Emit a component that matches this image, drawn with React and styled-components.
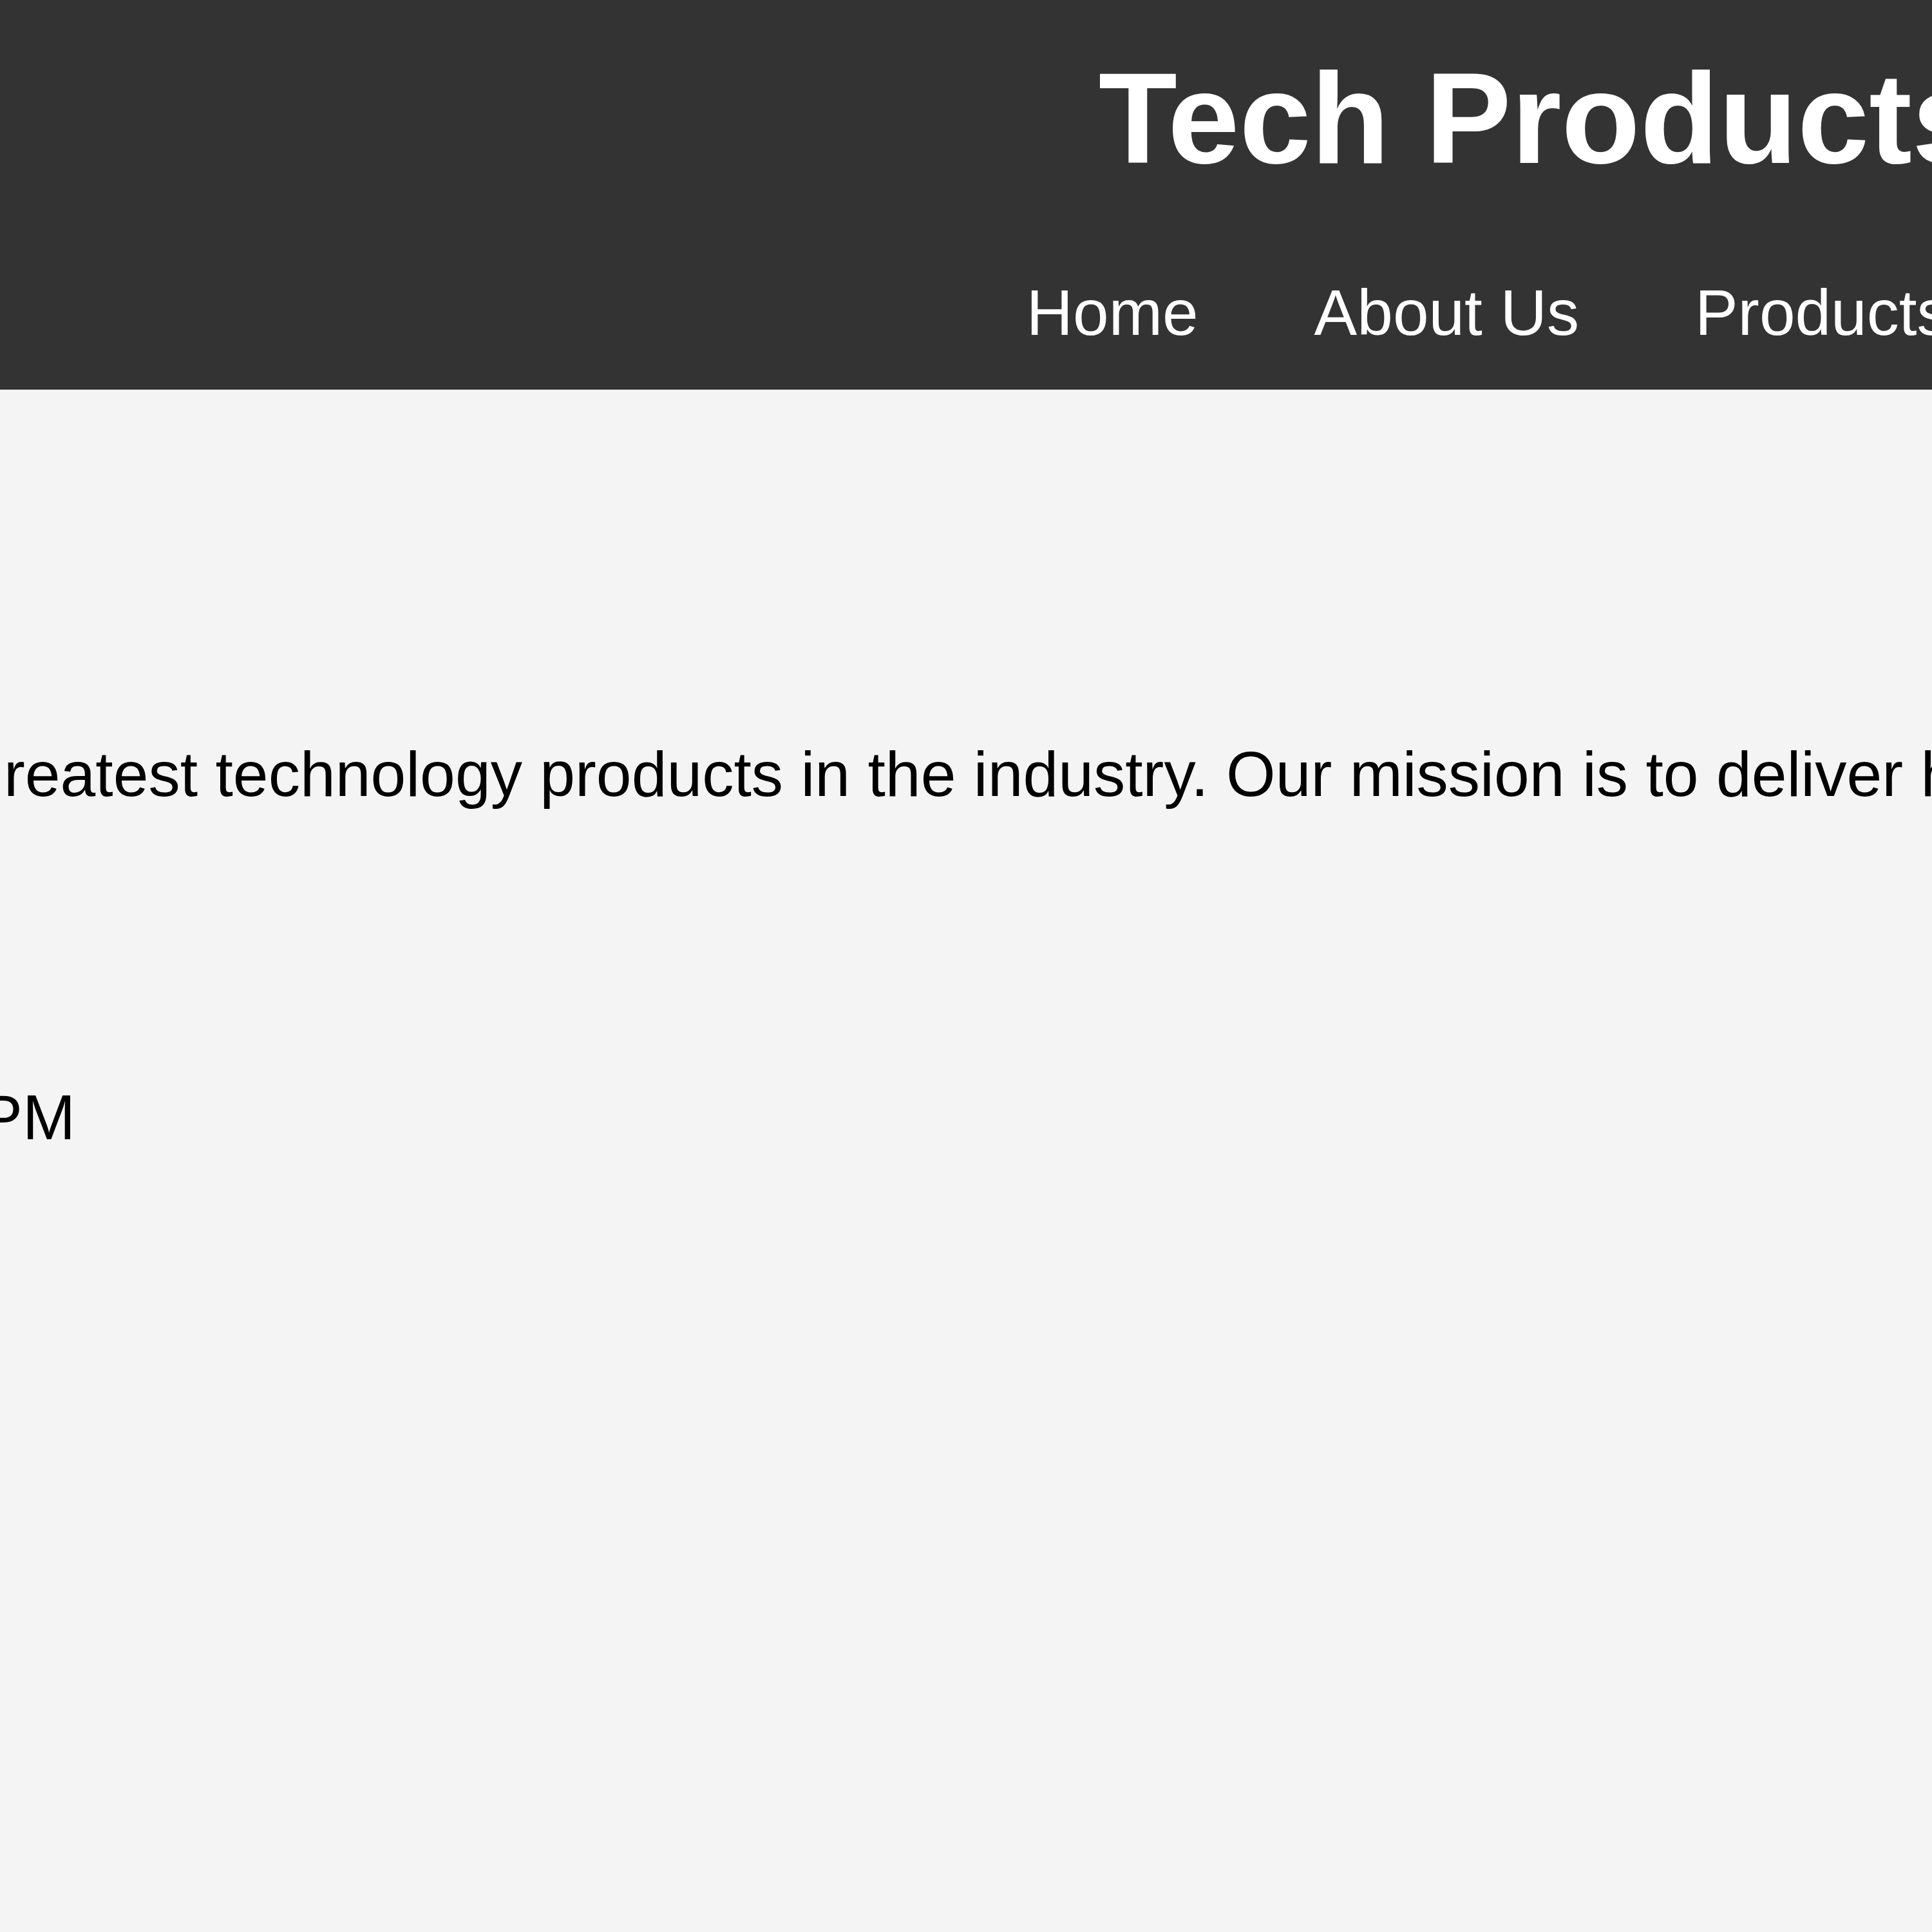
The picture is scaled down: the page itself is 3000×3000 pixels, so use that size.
import styled, { createGlobalStyle } from "styled-components";

const GlobalStyle = createGlobalStyle`
  html, body {
    margin: 0;
    padding: 0;
    background: #f4f4f4;
    font-family: "Liberation Sans", Arial, sans-serif;
    overflow: hidden;
  }
`;

// the page is wider than the window and sits scrolled to the right
const Viewport = styled.div`
  width: 100vw;
  min-height: 100vh;
  overflow: hidden;
`;

const Page = styled.div`
  width: 7320px;
  margin-left: -1267px;
`;

const Header = styled.header`
  background: #333333;
  color: #ffffff;
  padding: 69px 0 62px;
  text-align: center;

  h1 {
    margin: 0;
    font-size: 200px;
    font-weight: 700;
    line-height: normal;
  }
`;

const NavList = styled.ul`
  list-style: none;
  display: flex;
  justify-content: center;
  gap: 180px;
  margin: 129px 0 0;
  padding: 0 0 0 359px;

  a {
    color: #ffffff;
    text-decoration: none;
    font-size: 100px;
    line-height: normal;
  }
`;

const Main = styled.main`
  padding: 121px 125px;
  color: #000000;
`;

const Section = styled.section`
  h2 {
    margin: 125px 0;
    font-size: 147.75px;
    line-height: normal;
  }

  p {
    margin: 125px 0;
    font-size: 98.5px;
    line-height: normal;
    white-space: nowrap;
  }
`;

const links = ["Home", "About Us", "Products", "Contact"];

export default function App() {
    return (<Viewport>
        <GlobalStyle />
        <Page>
            <Header>
                <h1>Tech Products</h1>
                <nav>
                    <NavList>
                        {links.map((l) => (
                            <li key={l}><a href="#">{l}</a></li>
                        ))}
                    </NavList>
                </nav>
            </Header>
            <Main>
                <Section>
                    <h2>About Us</h2>
                    <p>We sell all the latest and greatest technology products in the industry. Our mission is to deliver high-quality products at affordable prices.</p>
                </Section>
                <Section>
                    <h2>Store Hours</h2>
                    <p>Monday - Friday: 9AM - 5PM</p>
                </Section>
            </Main>
        </Page>
    </Viewport>
    )
}
